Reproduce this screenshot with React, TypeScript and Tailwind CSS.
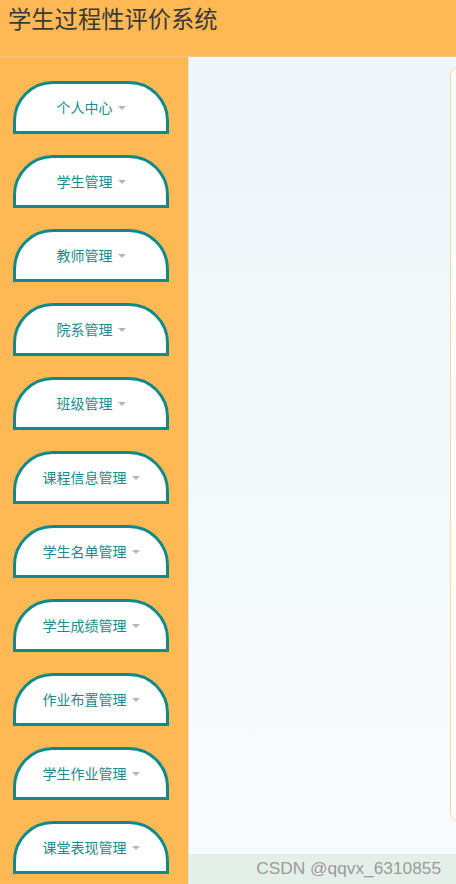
import { useState } from 'react';

const menus = [
  '个人中心',
  '学生管理',
  '教师管理',
  '院系管理',
  '班级管理',
  '课程信息管理',
  '学生名单管理',
  '学生成绩管理',
  '作业布置管理',
  '学生作业管理',
  '课堂表现管理',
];

function MenuButton({ label }: { label: string }) {
  return (
    <button className="flex h-[53px] w-[156px] shrink-0 items-center justify-center gap-[5px] rounded-t-[40px] border-[3px] border-[#0f8a8b] bg-white text-[14px] text-[#1b8a8e]">
      <span>{label}</span>
      <span className="mt-[1px] h-0 w-0 border-x-[4px] border-t-[4px] border-x-transparent border-t-[#b5b5b5]" />
    </button>
  );
}

export default function App() {
  const [active] = useState(0);

  return (
    <div
      className="flex h-[884px] w-[456px] flex-col overflow-hidden bg-[#ffb954]"
      style={{ fontFamily: '"Noto Sans CJK SC", "Noto Sans", sans-serif' }}
      data-active={active}
    >
      <header className="h-[57px] shrink-0 border-b border-[#edc48c] bg-[#ffb954] pl-[8px] pt-[2px]">
        <h1 className="text-[23.3px] leading-[32px] text-[#3a3a3a]">学生过程性评价系统</h1>
      </header>

      <div className="flex min-h-0 flex-1">
        <aside className="flex w-[188px] shrink-0 flex-col gap-[21px] pl-[13px] pt-[24px]">
          {menus.map((m) => (
            <MenuButton key={m} label={m} />
          ))}
        </aside>

        <main className="flex min-w-0 flex-1 flex-col border-l border-[#e3e3e3]">
          <div className="flex min-h-0 flex-1 overflow-hidden bg-gradient-to-b from-[#eef6f9] to-[#f8fbfc] pb-[32px] pt-[9px]">
            <div className="flex-1" />
            <div className="-mr-[34px] w-[40px] shrink-0 rounded-[10px] border border-[#f3d6ab] bg-white" />
          </div>
          <footer className="flex h-[30px] shrink-0 items-center justify-end bg-[#e5efea] pr-[15px]">
            <span className="text-[17.3px] text-[#9a9a9a]" style={{ fontFamily: '"Liberation Sans", Arial, sans-serif' }}>
              CSDN @qqvx_6310855
            </span>
          </footer>
        </main>
      </div>
    </div>
  );
}
